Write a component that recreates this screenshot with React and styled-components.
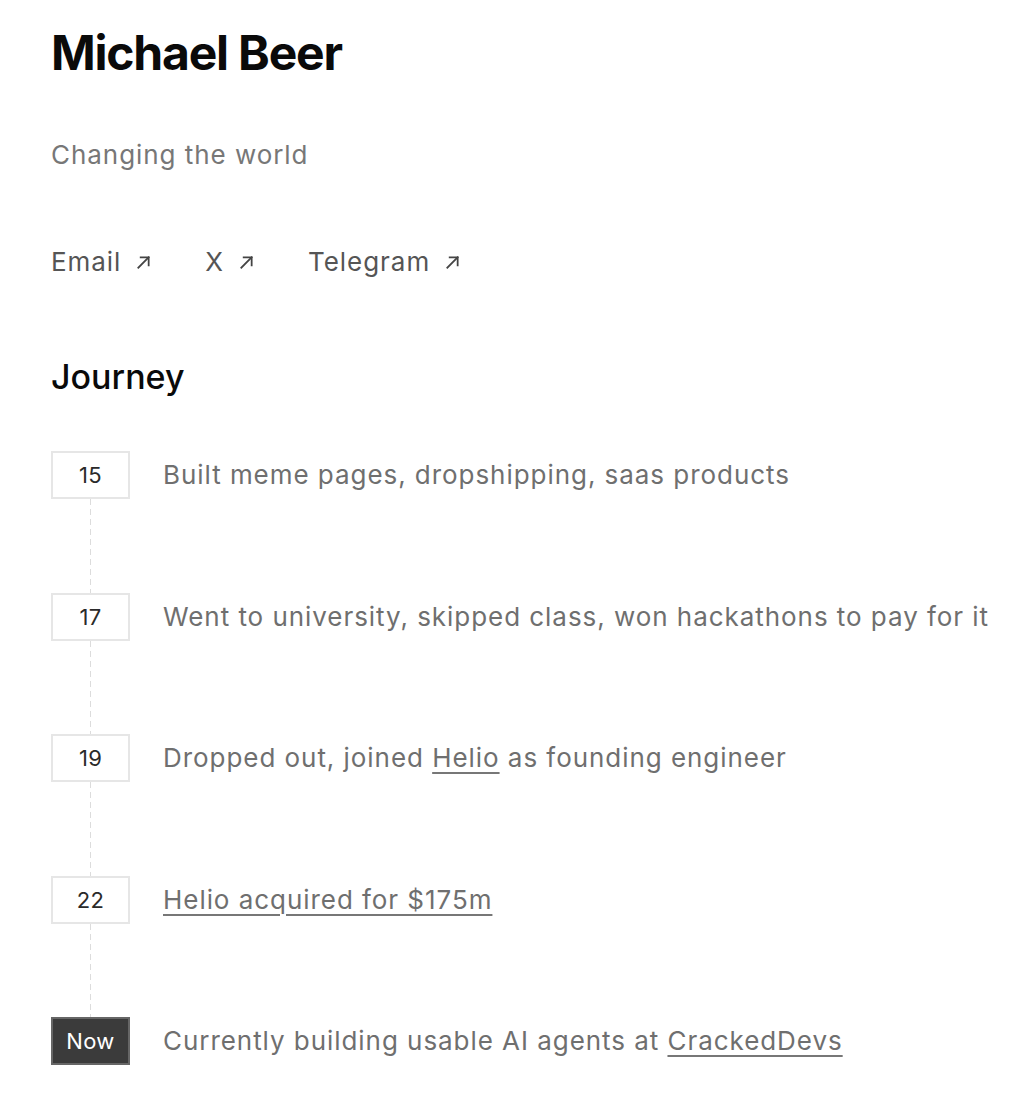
import React from 'react'
import styled, { createGlobalStyle } from 'styled-components'

const GlobalStyle = createGlobalStyle`
  html, body {
    margin: 0;
    padding: 0;
    background: #fff;
  }
  body {
    font-family: Inter, 'Noto Sans', sans-serif;
    -webkit-font-smoothing: antialiased;
  }
`

const Page = styled.main`
  padding: 22px 0 0 51px;
`

const Name = styled.h1`
  margin: 0;
  font-size: 48px;
  font-weight: 700;
  letter-spacing: -1.2px;
  line-height: 62px;
  color: #0a0a0a;
`

const Tagline = styled.p`
  margin: 53px 0 0;
  font-size: 26px;
  line-height: 36px;
  letter-spacing: 0.95px;
  color: #777;
`

const Links = styled.nav`
  display: flex;
  gap: 54px;
  margin-top: 71px;
`

const LinkItem = styled.a`
  display: inline-flex;
  align-items: center;
  gap: 15px;
  font-size: 26px;
  line-height: 36px;
  letter-spacing: 0.95px;
  color: #555;
  text-decoration: none;
`

const Arrow = () => (
  <svg width="15" height="15" viewBox="0 0 16 16" fill="none" stroke="#444" strokeWidth="1.9" strokeLinecap="square">
    <path d="M2.5 13.5 13.5 2.5" />
    <path d="M5 2.5h8.5V11" />
  </svg>
)

const Heading = styled.h2`
  margin: 75px 0 0;
  font-size: 34px;
  font-weight: 500;
  line-height: 44px;
  color: #0a0a0a;
`

const Timeline = styled.ol`
  list-style: none;
  margin: 52px 0 0;
  padding: 0;
`

const Item = styled.li`
  display: flex;
  align-items: flex-start;
  gap: 33px;
  height: 141.5px;
  &:last-child {
    height: auto;
  }
`

const Marker = styled.div`
  position: relative;
  flex: none;
  height: 100%;
  &::after {
    content: '';
    display: ${({ $last }) => ($last ? 'none' : 'block')};
    position: absolute;
    left: 39px;
    top: 48px;
    bottom: 0;
    width: 1px;
    background: repeating-linear-gradient(to bottom, #dcdcdc 0 6px, transparent 6px 10px);
  }
`

const Badge = styled.span`
  display: flex;
  align-items: center;
  justify-content: center;
  box-sizing: border-box;
  width: 79px;
  height: 48px;
  border: 2px solid ${({ $dark }) => ($dark ? '#666' : '#e6e6e6')};
  background: ${({ $dark }) => ($dark ? '#3b3b3b' : '#fff')};
  color: ${({ $dark }) => ($dark ? '#fff' : '#2a2a2a')};
  font-size: 22px;
  letter-spacing: 0.3px;
`

const Text = styled.p`
  margin: 0;
  font-size: 26px;
  line-height: 47px;
  letter-spacing: 0.95px;
  color: #6f6f6f;
  white-space: nowrap;
  a {
    color: inherit;
    text-decoration: underline;
    text-decoration-thickness: 2px;
    text-underline-offset: 5px;
    text-decoration-color: #777;
  }
`

const journey = [
  { age: '15', text: 'Built meme pages, dropshipping, saas products' },
  { age: '17', text: 'Went to university, skipped class, won hackathons to pay for it' },
  { age: '19', text: <>Dropped out, joined <a href="#">Helio</a> as founding engineer</> },
  { age: '22', text: <a href="#">Helio acquired for $175m</a> },
  { age: 'Now', text: <>Currently building usable AI agents at <a href="#">CrackedDevs</a></>, dark: true },
]

export default function App() {
  return (
    <>
      <GlobalStyle />
      <Page>
        <Name>Michael Beer</Name>
        <Tagline>Changing the world</Tagline>
        <Links>
          {['Email', 'X', 'Telegram'].map((label) => (
            <LinkItem key={label} href="#">
              {label}
              <Arrow />
            </LinkItem>
          ))}
        </Links>
        <Heading>Journey</Heading>
        <Timeline>
          {journey.map((item, i) => (
            <Item key={item.age}>
              <Marker $last={i === journey.length - 1}>
                <Badge $dark={item.dark}>{item.age}</Badge>
              </Marker>
              <Text>{item.text}</Text>
            </Item>
          ))}
        </Timeline>
      </Page>
    </>
  )
}
